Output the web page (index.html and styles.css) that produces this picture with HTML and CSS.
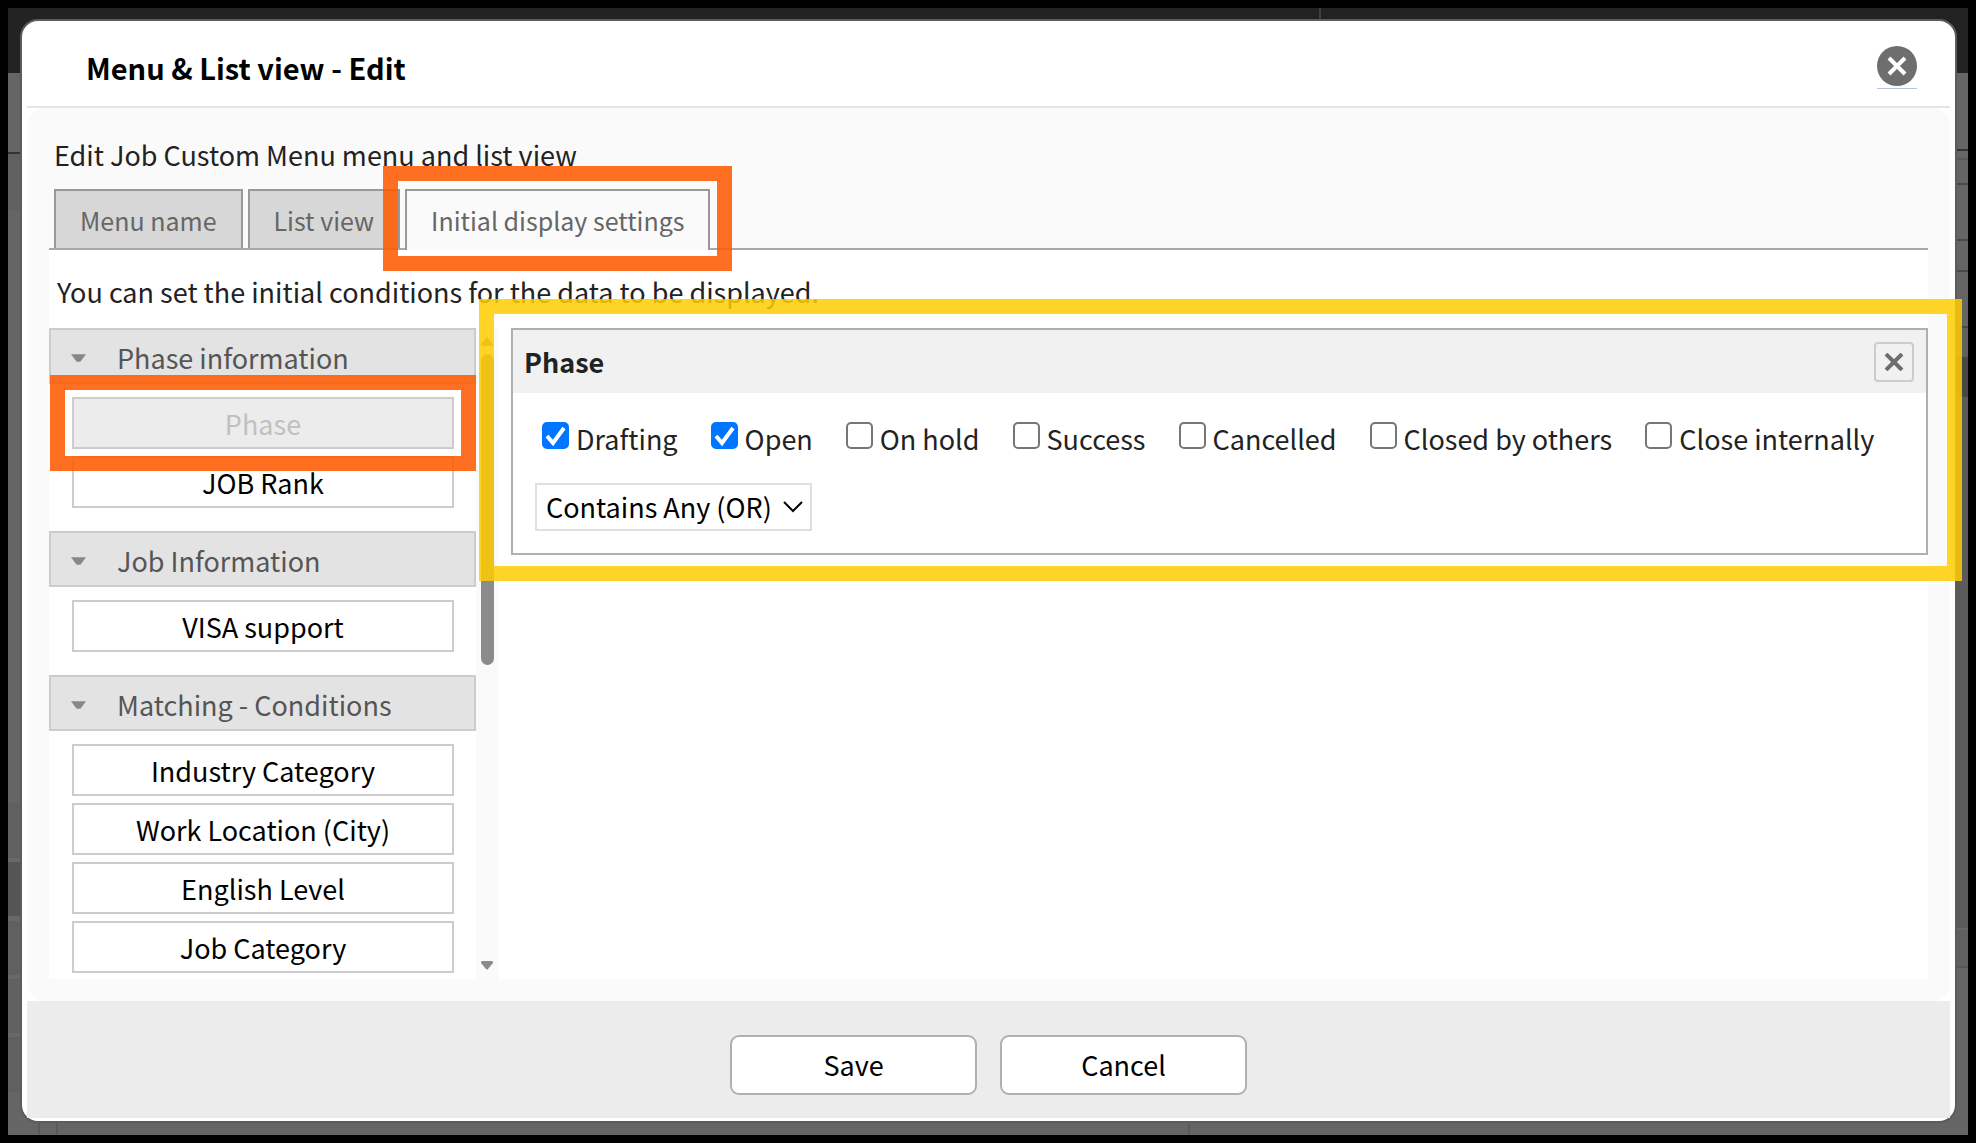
FILE: index.html
```html
<!DOCTYPE html>
<html lang="en">
<head>
    <meta charset="UTF-8">
    <title>Menu &amp; List view - Edit</title>
    <link rel="stylesheet" href="styles.css">
</head>
<body>
    <div class="page">
        <div class="modal">
            <header class="modal-header">
                <h1>Menu &amp; List view - Edit</h1>
                <button class="close" type="button" aria-label="Close">
                    <svg viewBox="0 0 40 43" width="40" height="43">
                        <circle cx="20" cy="21" r="20" fill="#6e6e6e"/>
                        <path d="M12 13l16 16M28 13l-16 16" stroke="#fff" stroke-width="4"/>
                    </svg>
                </button>
            </header>
            <main class="modal-body">
                <p class="lead">Edit Job Custom Menu menu and list view</p>
                <nav class="tabs">
                    <button class="tab" type="button">Menu name</button>
                    <button class="tab" type="button">List view</button>
                    <button class="tab active" type="button">Initial display settings<span class="mark mark-tab"></span></button>
                </nav>
                <section class="panel">
                    <p class="note">You can set the initial conditions for the data to be displayed.</p>
                    <div class="columns">
                        <div class="fields">
                            <div class="field-list">
                                <div class="group">
                                    <h2><svg class="caret" viewBox="0 0 16 8"><path d="M0 0h16l-6 8h-4z"/></svg>Phase information</h2>
                                    <div class="items">
                                        <div class="marked">
                                            <button class="item" type="button" disabled>Phase</button>
                                            <span class="mark mark-item"></span>
                                        </div>
                                        <button class="item" type="button">JOB Rank</button>
                                    </div>
                                </div>
                                <div class="group">
                                    <h2><svg class="caret" viewBox="0 0 16 8"><path d="M0 0h16l-6 8h-4z"/></svg>Job Information</h2>
                                    <div class="items">
                                        <button class="item" type="button">VISA support</button>
                                    </div>
                                </div>
                                <div class="group">
                                    <h2><svg class="caret" viewBox="0 0 16 8"><path d="M0 0h16l-6 8h-4z"/></svg>Matching - Conditions</h2>
                                    <div class="items">
                                        <button class="item" type="button">Industry Category</button>
                                        <button class="item" type="button">Work Location (City)</button>
                                        <button class="item" type="button">English Level</button>
                                        <button class="item" type="button">Job Category</button>
                                    </div>
                                </div>
                            </div>
                            <div class="scrollbar">
                                <svg viewBox="0 0 12 9" width="12" height="9"><path d="M5 1q1-1 2 0l5 6q0 2-1 2h-10q-1 0-1-2z"/></svg>
                                <div class="track"><div class="thumb"></div></div>
                                <svg viewBox="0 0 12 9" width="12" height="9"><path d="M5 8q1 1 2 0l5-6q0-2-1-2h-10q-1 0-1 2z"/></svg>
                            </div>
                        </div>
                        <div class="conditions">
                            <div class="card">
                                <div class="card-header">
                                    <h3>Phase</h3>
                                    <button class="remove" type="button" aria-label="Remove">
                                        <svg viewBox="0 0 20 18" width="20" height="18"><path d="M2 1l16 16M18 1l-16 16" stroke="#6e6e6e" stroke-width="4"/></svg>
                                    </button>
                                </div>
                                <div class="card-body">
                                    <div class="checks">
                                        <label><input type="checkbox" checked>Drafting</label>
                                        <label><input type="checkbox" checked>Open</label>
                                        <label><input type="checkbox">On hold</label>
                                        <label><input type="checkbox">Success</label>
                                        <label><input type="checkbox">Cancelled</label>
                                        <label><input type="checkbox">Closed by others</label>
                                        <label><input type="checkbox">Close internally</label>
                                    </div>
                                    <div class="select">
                                        <select aria-label="Match type">
                                            <option>Contains Any (OR)</option>
                                        </select>
                                        <svg viewBox="0 0 20 12" width="20" height="12"><path d="M1 1l9 9 9-9" fill="none" stroke="#000" stroke-width="2"/></svg>
                                    </div>
                                </div>
                                <span class="mark mark-card"></span>
                            </div>
                        </div>
                    </div>
                </section>
            </main>
            <footer class="modal-footer">
                <button type="button">Save</button>
                <button type="button">Cancel</button>
            </footer>
        </div>
    </div>
</body>
</html>
```
FILE: styles.css
```css
:root {
    --orange: rgba(255, 90, 0, 0.87);
    --yellow: rgba(255, 204, 0, 0.85);
    --line: #ccc;
}
* {
    box-sizing: border-box;
}
body {
    margin: 0;
    color: #222;
    font-family: "Noto Sans CJK JP", sans-serif;
    font-size: 27px;
    line-height: 38px;
}
h1, h2, h3, p {
    margin: 0;
}
button, select {
    font: inherit;
    color: #000;
    background: #fff;
}
/* dimmed page, only its edges show round the modal */
.page {
    display: flex;
    min-height: 100vh;
    padding: 11px 11px 12px 12px;
    border: 8px solid #000;
    background:
        linear-gradient(#404040, #404040) 1311px 0 / 2px 12px no-repeat,
        linear-gradient(#5a5a5a, #5a5a5a) 30px 100% / 2px 14px no-repeat,
        linear-gradient(#5a5a5a, #5a5a5a) 48px 100% / 2px 14px no-repeat,
        linear-gradient(#5a5a5a, #5a5a5a) 1180px 100% / 2px 14px no-repeat,
        linear-gradient(#232323 65px, #656565 65px 144px, #333 144px 146px, #606060 146px 202px, #656565 202px 795px,
            #606060 795px 850px, #686868 850px 854px, #555 854px 908px, #686868 908px 913px, #606060 913px 967px,
            #686868 967px 971px, #606060 971px 1025px, #686868 1025px 1029px, #606060 1029px 1084px, #656565 1084px) 0 0 / 20px 100% no-repeat,
        linear-gradient(#232323 65px, #656565 65px 141px, #333 141px 143px, #656565 143px 150px, #585858 150px 152px,
            #656565 152px 175px, #444a4a 175px 177px, #656565 177px 231px, #444a4a 231px 233px, #656565 233px 262px,
            #444a4a 262px 264px, #656565 264px 318px, #4a4a4a 318px 320px, #606060 320px 349px, #484848 349px 389px,
            #5b5b5b 389px 920px, #686868 920px 922px, #606060 922px 958px, #555 958px 960px, #656565 960px) 100% 0 / 20px 100% no-repeat,
        linear-gradient(#232323 65px, #656565 65px);
}
.modal {
    flex: 1;
    display: flex;
    flex-direction: column;
    padding: 0 5px 3px;
    border: 2px solid #5c5c5c;
    border-radius: 18px;
    background: #fff;
}
.modal-header {
    display: flex;
    align-items: center;
    justify-content: space-between;
    height: 87px;
    padding: 6px 33px 0 59px;
    border-bottom: 2px solid #e5e5e5;
}
.modal-header h1 {
    font-size: 29px;
    font-weight: bold;
    color: #000;
}
.close {
    display: flex;
    padding: 0;
    border: 0;
    border-bottom: 1px solid #b8c6d8;
}
.modal-body {
    flex: 1;
    display: flex;
    flex-direction: column;
    padding: 28px 22px 22px;
    border-radius: 18px;
    background: #fafafa;
}
.lead {
    padding-left: 5px;
}
.tabs {
    display: flex;
    gap: 5px;
    margin-top: 15px;
    padding-left: 5px;
    border-bottom: 2px solid #a8a8a8;
}
.tab {
    position: relative;
    height: 59px;
    padding: 1px 24px 0;
    border: 2px solid #999;
    border-bottom: 0;
    font-size: 25px;
    color: #666;
    background: #d7d7d7;
}
.tab.active {
    height: 61px;
    margin-bottom: -2px;
    padding-bottom: 2px;
    background: #fafafa;
}
.panel {
    flex: 1;
    display: flex;
    flex-direction: column;
    background: #fff;
}
.note {
    padding: 23px 8px 17px;
}
.columns {
    flex: 1;
    display: flex;
    gap: 13px;
}
.fields {
    display: flex;
    width: 449px;
}
.field-list {
    flex: 1;
}
.group {
    margin-bottom: 23px;
}
.group:last-child {
    margin-bottom: 0;
}
.group h2 {
    display: flex;
    align-items: center;
    gap: 31px;
    height: 56px;
    padding: 4px 20px 0;
    border: 2px solid var(--line);
    font-size: 27px;
    font-weight: normal;
    color: #555;
    background: #e3e3e3;
}
.caret {
    width: 15px;
    height: 8px;
    fill: #888;
}
.items {
    display: flex;
    flex-direction: column;
    gap: 7px;
    padding: 13px 22px 0 23px;
}
.item {
    width: 100%;
    height: 52px;
    padding: 1px 0 0;
    border: 2px solid var(--line);
}
.item:disabled {
    color: #c0c0c0;
    background: #ececec;
}
.scrollbar {
    display: flex;
    flex-direction: column;
    align-items: center;
    width: 22px;
    padding: 9px 0;
    fill: #8b8b8b;
    background: #fafafa;
}
.track {
    flex: 1;
    padding: 8px 0;
}
.thumb {
    width: 13px;
    height: 52%;
    border-radius: 7px;
    background: #8b8b8b;
}
.conditions {
    flex: 1;
}
.card {
    position: relative;
    border: 2px solid #b0b0b0;
}
.card-header {
    display: flex;
    align-items: center;
    justify-content: space-between;
    height: 63px;
    padding: 0 12px 0 11px;
    background: #f1f1f1;
}
.card-header h3 {
    font-size: 27px;
}
.remove {
    display: flex;
    align-items: center;
    justify-content: center;
    width: 40px;
    height: 40px;
    padding: 0;
    border: 2px solid var(--line);
    border-radius: 4px;
    background: #f1f1f1;
}
.card-body {
    padding: 27px 22px 22px;
}
.checks {
    display: flex;
    flex-wrap: wrap;
    gap: 20px 33px;
    padding: 0 7px;
}
.checks label {
    display: flex;
    gap: 7px;
}
.checks input {
    width: 27px;
    height: 27px;
    margin: 2px 0 0;
    border: 2px solid #767676;
    border-radius: 5px;
    background: #fff;
    appearance: none;
}
.checks input:checked {
    border-color: #0075ff;
    background: #0075ff url("data:image/svg+xml,%3Csvg xmlns='http://www.w3.org/2000/svg' viewBox='0 0 27 27'%3E%3Cpath d='M5 14l6 7L22 6' fill='none' stroke='%23fff' stroke-width='4'/%3E%3C/svg%3E") center / 27px 27px;
}
.select {
    display: flex;
    align-items: center;
    position: relative;
    width: fit-content;
    margin-top: 25px;
}
.select select {
    height: 48px;
    padding: 0 38px 0 9px;
    border: 2px solid #e0e0e0;
    appearance: none;
}
.select svg {
    position: absolute;
    right: 9px;
}
.modal-footer {
    display: flex;
    justify-content: center;
    gap: 23px;
    padding: 34px 0 23px;
    background: #ececec;
}
.modal-footer button {
    width: 247px;
    height: 60px;
    border: 2px solid #aab2b8;
    border-radius: 9px;
}

/* highlight frames */
.mark {
    position: absolute;
    z-index: 1;
    border: 15px solid var(--orange);
    pointer-events: none;
}
.marked {
    position: relative;
}
.mark-tab {
    inset: -25px -24px -21px;
}
.mark-item {
    inset: -22px;
}
.mark-card {
    inset: -31px -36px -28px -34px;
    border-color: var(--yellow);
}
```
